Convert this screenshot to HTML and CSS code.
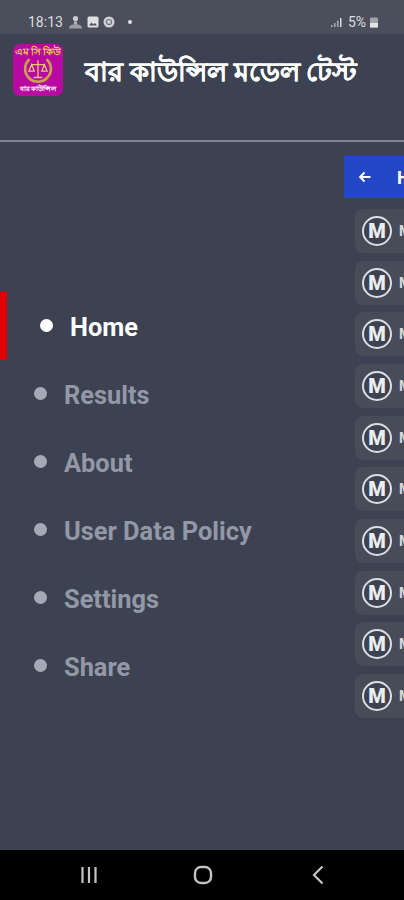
FILE: index.html
```html
<!DOCTYPE html>
<html lang="bn">
<head>
<meta charset="utf-8">
<title>Bar Council Model Test</title>
<link rel="stylesheet" href="styles.css">
</head>
<body>
<div class="screen">
  <div class="status">
    <div class="status-left">
      <span class="time">18:13</span>
      <svg class="si" width="15" height="15" viewBox="0 0 15 15"><circle cx="7.500" cy="3.500" r="2.600" fill="#c9cbd0"/><path d="M6 6.500h3v3H6z" fill="#b4b7bd"/><path d="M1 13.500c0-3 3-4.200 6.500-4.200s6.500 1.200 6.500 4.200z" fill="#9a9da5"/></svg>
      <svg class="si" width="12" height="12" viewBox="0 0 12 12"><rect x="0.500" y="0.500" width="11" height="11" rx="1.500" fill="#dfe0e3"/><path d="M2 9.500l2.500-3 2 2 1.500-1.500 2 2.500z" fill="#4a4e5a"/></svg>
      <svg class="si" width="12" height="12" viewBox="0 0 12 12"><circle cx="6" cy="6" r="5.500" fill="#cfd1d5"/><circle cx="6" cy="6" r="2.500" fill="none" stroke="#70737d" stroke-width="1.200"/></svg>
      <span class="dot-small"></span>
    </div>
    <div class="status-right">
      <svg width="12" height="11" viewBox="0 0 12 11"><path d="M1 10h1.500V8H1zM4 10h1.500V6H4zM7 10h1.500V3.500H7z" fill="#a9acb3"/><path d="M10 10h1.500V1H10z" fill="#d8d9dc"/></svg>
      <span class="pct">5%</span>
      <svg width="10" height="11" viewBox="0 0 10 11"><rect x="1" y="0.500" width="8" height="10" rx="1" fill="#9fa2a9"/><rect x="1" y="6" width="8" height="4.500" fill="#e3e4e6"/></svg>
    </div>
  </div>

  <header class="head">
    <div class="logo">
      <span class="logo-top">এম সি কিউ</span>
      <svg class="scale" width="30" height="30" viewBox="0 0 28 28"><path d="M6 4a12 12 0 1 0 16 0" fill="none" stroke="#c9a24a" stroke-width="2.500"/><path d="M14 5v16M8 9h12M10 21h8M8 9l-2.500 6h5zM20 9l-2.500 6h5z" fill="none" stroke="#e6c76a" stroke-width="1.200"/></svg>
      <span class="logo-bottom">বার কাউন্সিল</span>
    </div>
    <h1 class="title">বার কাউন্সিল মডেল টেস্ট</h1>
  </header>

  <main class="body">
    <nav class="menu">
      <a class="item active"><span class="bullet"></span>Home</a>
      <a class="item"><span class="bullet"></span>Results</a>
      <a class="item"><span class="bullet"></span>About</a>
      <a class="item"><span class="bullet"></span>User Data Policy</a>
      <a class="item"><span class="bullet"></span>Settings</a>
      <a class="item"><span class="bullet"></span>Share</a>
    </nav>
    <section class="peek">
      <div class="peek-bar">
        <svg width="14" height="14" viewBox="0 0 14 14"><path d="M12.500 7H2M6.500 2.500L2 7l4.500 4.500" fill="none" stroke="#fff" stroke-width="1.800"/></svg>
        <span class="peek-title">Home</span>
      </div>
      <div class="cards">
        <div class="card"><span class="m">M</span><span class="card-text">Model</span></div>
        <div class="card"><span class="m">M</span><span class="card-text">Model</span></div>
        <div class="card"><span class="m">M</span><span class="card-text">Model</span></div>
        <div class="card"><span class="m">M</span><span class="card-text">Model</span></div>
        <div class="card"><span class="m">M</span><span class="card-text">Model</span></div>
        <div class="card"><span class="m">M</span><span class="card-text">Model</span></div>
        <div class="card"><span class="m">M</span><span class="card-text">Model</span></div>
        <div class="card"><span class="m">M</span><span class="card-text">Model</span></div>
        <div class="card"><span class="m">M</span><span class="card-text">Model</span></div>
        <div class="card"><span class="m">M</span><span class="card-text">Model</span></div>
      </div>
    </section>
  </main>

  <footer class="navbar">
    <svg width="18" height="20" viewBox="0 0 18 20"><path d="M2.500 2v16M9 2v16M15.500 2v16" stroke="#c4c4c4" stroke-width="2.200" fill="none"/></svg>
    <svg class="nav-home" width="20" height="20" viewBox="0 0 20 20"><rect x="2" y="2" width="16" height="16" rx="6" fill="none" stroke="#c4c4c4" stroke-width="2.400"/></svg>
    <svg width="14" height="20" viewBox="0 0 14 20"><path d="M11.500 1.500L3 10l8.500 8.500" fill="none" stroke="#c4c4c4" stroke-width="2.200"/></svg>
  </footer>
</div>
</body>
</html>
```
FILE: styles.css
```css
* { box-sizing: border-box; }
html, body { margin: 0; padding: 0; }
body { font-family: Roboto, "Noto Sans", sans-serif; background: #3c4252; }
.screen { width: 404px; height: 900px; display: flex; flex-direction: column; overflow: hidden; background: #3c4252; }

.status { height: 34px; flex: none; background: #4b4f5b; display: flex; justify-content: space-between; align-items: center; padding: 0 25px 0 28px; color: #dcdde0; font-size: 14px; }
.status-left, .status-right { display: flex; align-items: center; margin-top: 10px; }
.status-left { gap: 4px; }
.status-right { gap: 3px; }
.time { margin-right: 1px; }
.dot-small { width: 4px; height: 4px; border-radius: 50%; background: #e0e1e4; margin-left: 9px; }
.pct { margin-left: 3px; }

.head { height: 108px; flex: none; display: flex; align-items: flex-start; padding: 10px 0 0 13px; border-bottom: 2px solid #7f8490; }
.logo { width: 50px; height: 52px; border-radius: 7px; background: #b80aa0; display: flex; flex-direction: column; align-items: center; overflow: hidden; padding-top: 2px; }
.logo-top { font-size: 10px; line-height: 11px; font-weight: 700; color: #e9d24a; white-space: nowrap; }
.scale { flex: none; margin-top: -2px; }
.logo-bottom { font-size: 7px; line-height: 9px; font-weight: 700; color: #fff; white-space: nowrap; }
.title { margin: 11px 0 0 22px; font-size: 27.400px; line-height: 34px; font-weight: 700; color: #fff; white-space: nowrap; -webkit-text-stroke: 0.300px #fff; }

.body { flex: 1; min-height: 0; display: flex; overflow: hidden; }
.menu { width: 344px; flex: none; display: flex; flex-direction: column; padding-top: 150px; }
.item { height: 68px; display: flex; align-items: center; gap: 17px; padding: 2px 0 0 34px; font-size: 25.400px; font-weight: 700; color: #9498a6; white-space: nowrap; }
.bullet { width: 13px; height: 13px; border-radius: 50%; background: #a6aab6; flex: none; margin-top: -4px; }
.item.active { color: #fff; padding-left: 40px; box-shadow: inset 7px 0 0 #e00000; }
.item.active .bullet { background: #fff; }

.peek { flex: none; width: 60px; padding-top: 14px; overflow: hidden; }
.peek-bar { width: 200px; height: 42px; background: #2447c8; display: flex; align-items: center; gap: 25px; padding-left: 14px; color: #fff; font-size: 18px; font-weight: 700; }
.cards { display: flex; flex-direction: column; gap: 7.670px; margin: 11px 0 0 11px; }
.card { width: 200px; height: 44px; border-radius: 8px; background: #484c58; display: flex; align-items: center; gap: 7px; padding-left: 7px; }
.m { width: 30px; height: 30px; border: 2px solid #dcdee3; border-radius: 50%; background: #3d4252; display: flex; align-items: center; justify-content: center; color: #eceded; font-size: 20px; font-weight: 900; flex: none; }
.card-text { color: #d5d6da; font-size: 14px; font-weight: 700; }

.navbar { height: 50px; flex: none; background: #000; display: flex; justify-content: space-between; align-items: center; padding: 0 79px 0 80px; }
.nav-home { margin-right: 3px; }
```
